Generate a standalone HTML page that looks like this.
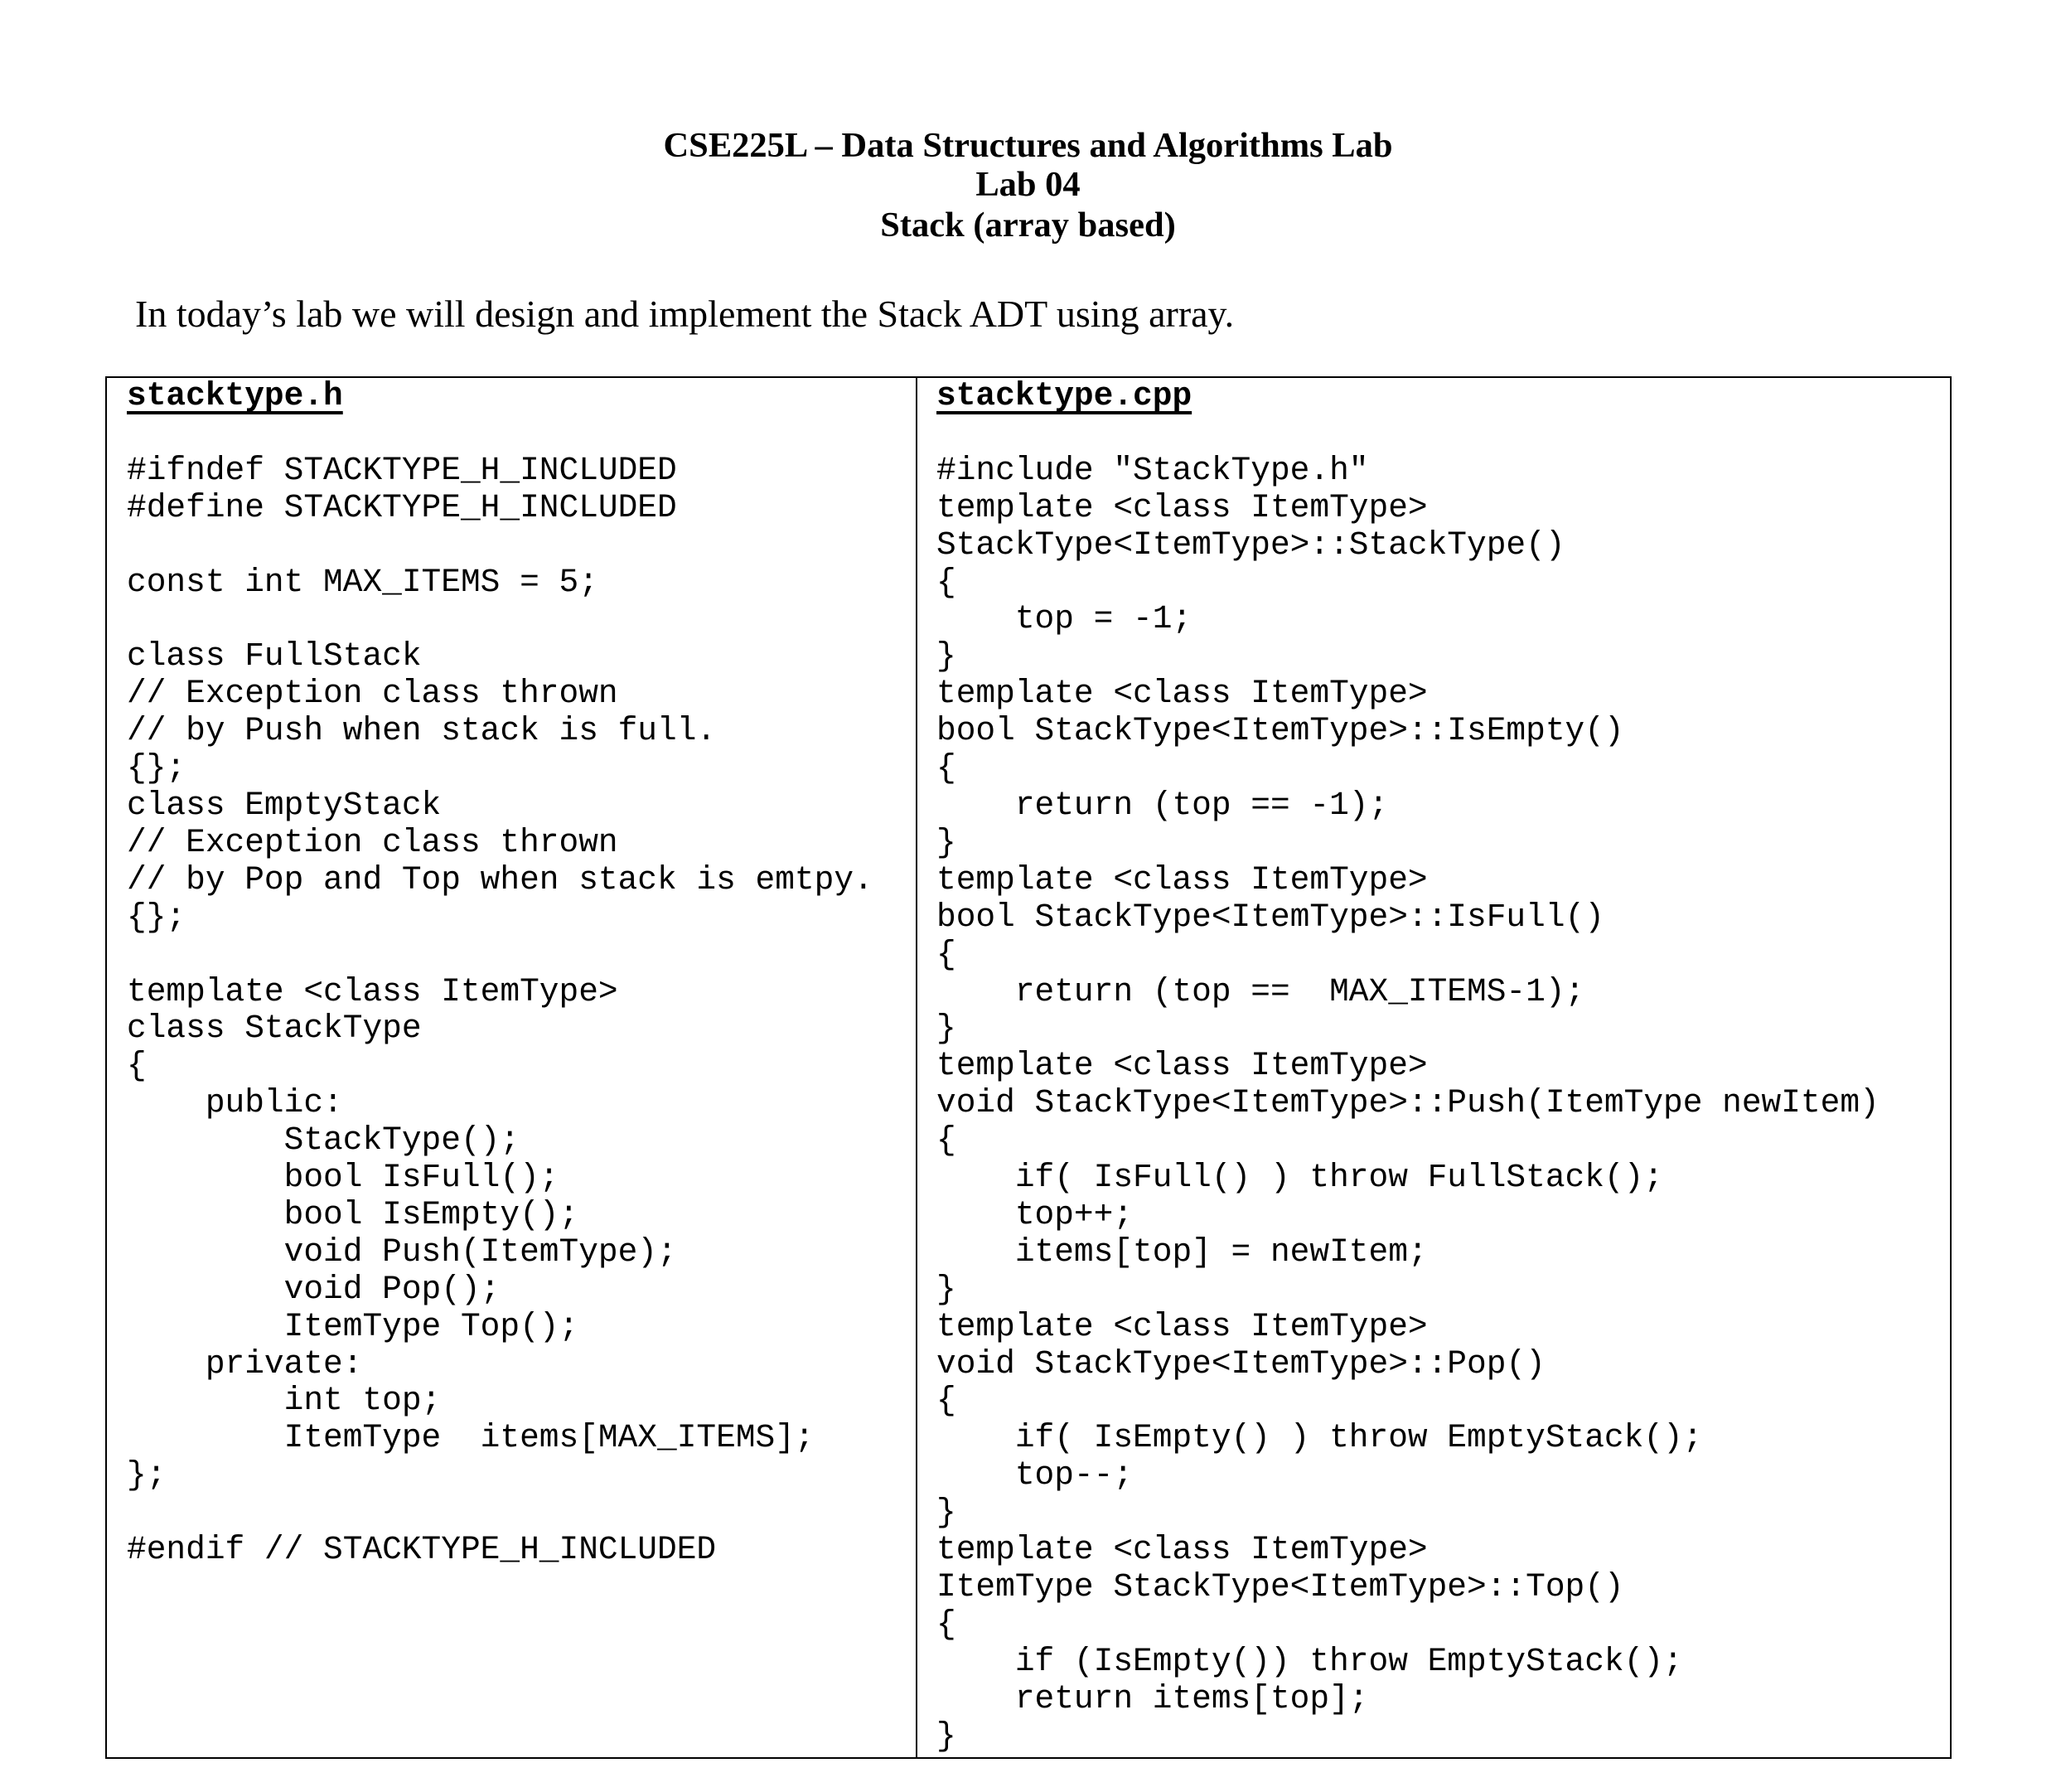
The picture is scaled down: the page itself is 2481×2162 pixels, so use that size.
<!DOCTYPE html>
<html><head><meta charset="utf-8"><style>
html,body{margin:0;padding:0;background:#fff;}
body{width:2481px;height:2162px;position:relative;overflow:hidden;color:#000;}
.t{position:absolute;left:0;width:2481px;text-align:center;font-family:"Liberation Serif",serif;font-weight:bold;font-size:42.5px;line-height:48px;}
.intro{position:absolute;left:163px;top:351px;font-family:"Liberation Serif",serif;font-size:46px;line-height:56px;white-space:nowrap;}
.box{position:absolute;left:127px;top:454px;width:2224px;height:1664px;border:2px solid #000;}
.div{position:absolute;left:1105px;top:454px;width:2px;height:1666px;background:#000;}
pre{position:absolute;margin:0;font-family:"Liberation Mono",monospace;font-size:39.5px;line-height:44.9px;top:456px;}
pre b{text-decoration:underline;text-decoration-thickness:4px;text-underline-offset:8px;}
</style></head><body>
<div class="t" style="top:152px">CSE225L – Data Structures and Algorithms Lab</div>
<div class="t" style="top:199px">Lab 04</div>
<div class="t" style="top:248px">Stack (array based)</div>
<div class="intro">In today’s lab we will design and implement the Stack ADT using array.</div>
<div class="box"></div>
<div class="div"></div>
<pre style="left:153px"><b>stacktype.h</b>

#ifndef STACKTYPE_H_INCLUDED
#define STACKTYPE_H_INCLUDED

const int MAX_ITEMS = 5;

class FullStack
// Exception class thrown
// by Push when stack is full.
{};
class EmptyStack
// Exception class thrown
// by Pop and Top when stack is emtpy.
{};

template &lt;class ItemType&gt;
class StackType
{
    public:
        StackType();
        bool IsFull();
        bool IsEmpty();
        void Push(ItemType);
        void Pop();
        ItemType Top();
    private:
        int top;
        ItemType  items[MAX_ITEMS];
};

#endif // STACKTYPE_H_INCLUDED</pre>
<pre style="left:1130px"><b>stacktype.cpp</b>

#include "StackType.h"
template &lt;class ItemType&gt;
StackType&lt;ItemType&gt;::StackType()
{
    top = -1;
}
template &lt;class ItemType&gt;
bool StackType&lt;ItemType&gt;::IsEmpty()
{
    return (top == -1);
}
template &lt;class ItemType&gt;
bool StackType&lt;ItemType&gt;::IsFull()
{
    return (top ==  MAX_ITEMS-1);
}
template &lt;class ItemType&gt;
void StackType&lt;ItemType&gt;::Push(ItemType newItem)
{
    if( IsFull() ) throw FullStack();
    top++;
    items[top] = newItem;
}
template &lt;class ItemType&gt;
void StackType&lt;ItemType&gt;::Pop()
{
    if( IsEmpty() ) throw EmptyStack();
    top--;
}
template &lt;class ItemType&gt;
ItemType StackType&lt;ItemType&gt;::Top()
{
    if (IsEmpty()) throw EmptyStack();
    return items[top];
}</pre>
</body></html>
